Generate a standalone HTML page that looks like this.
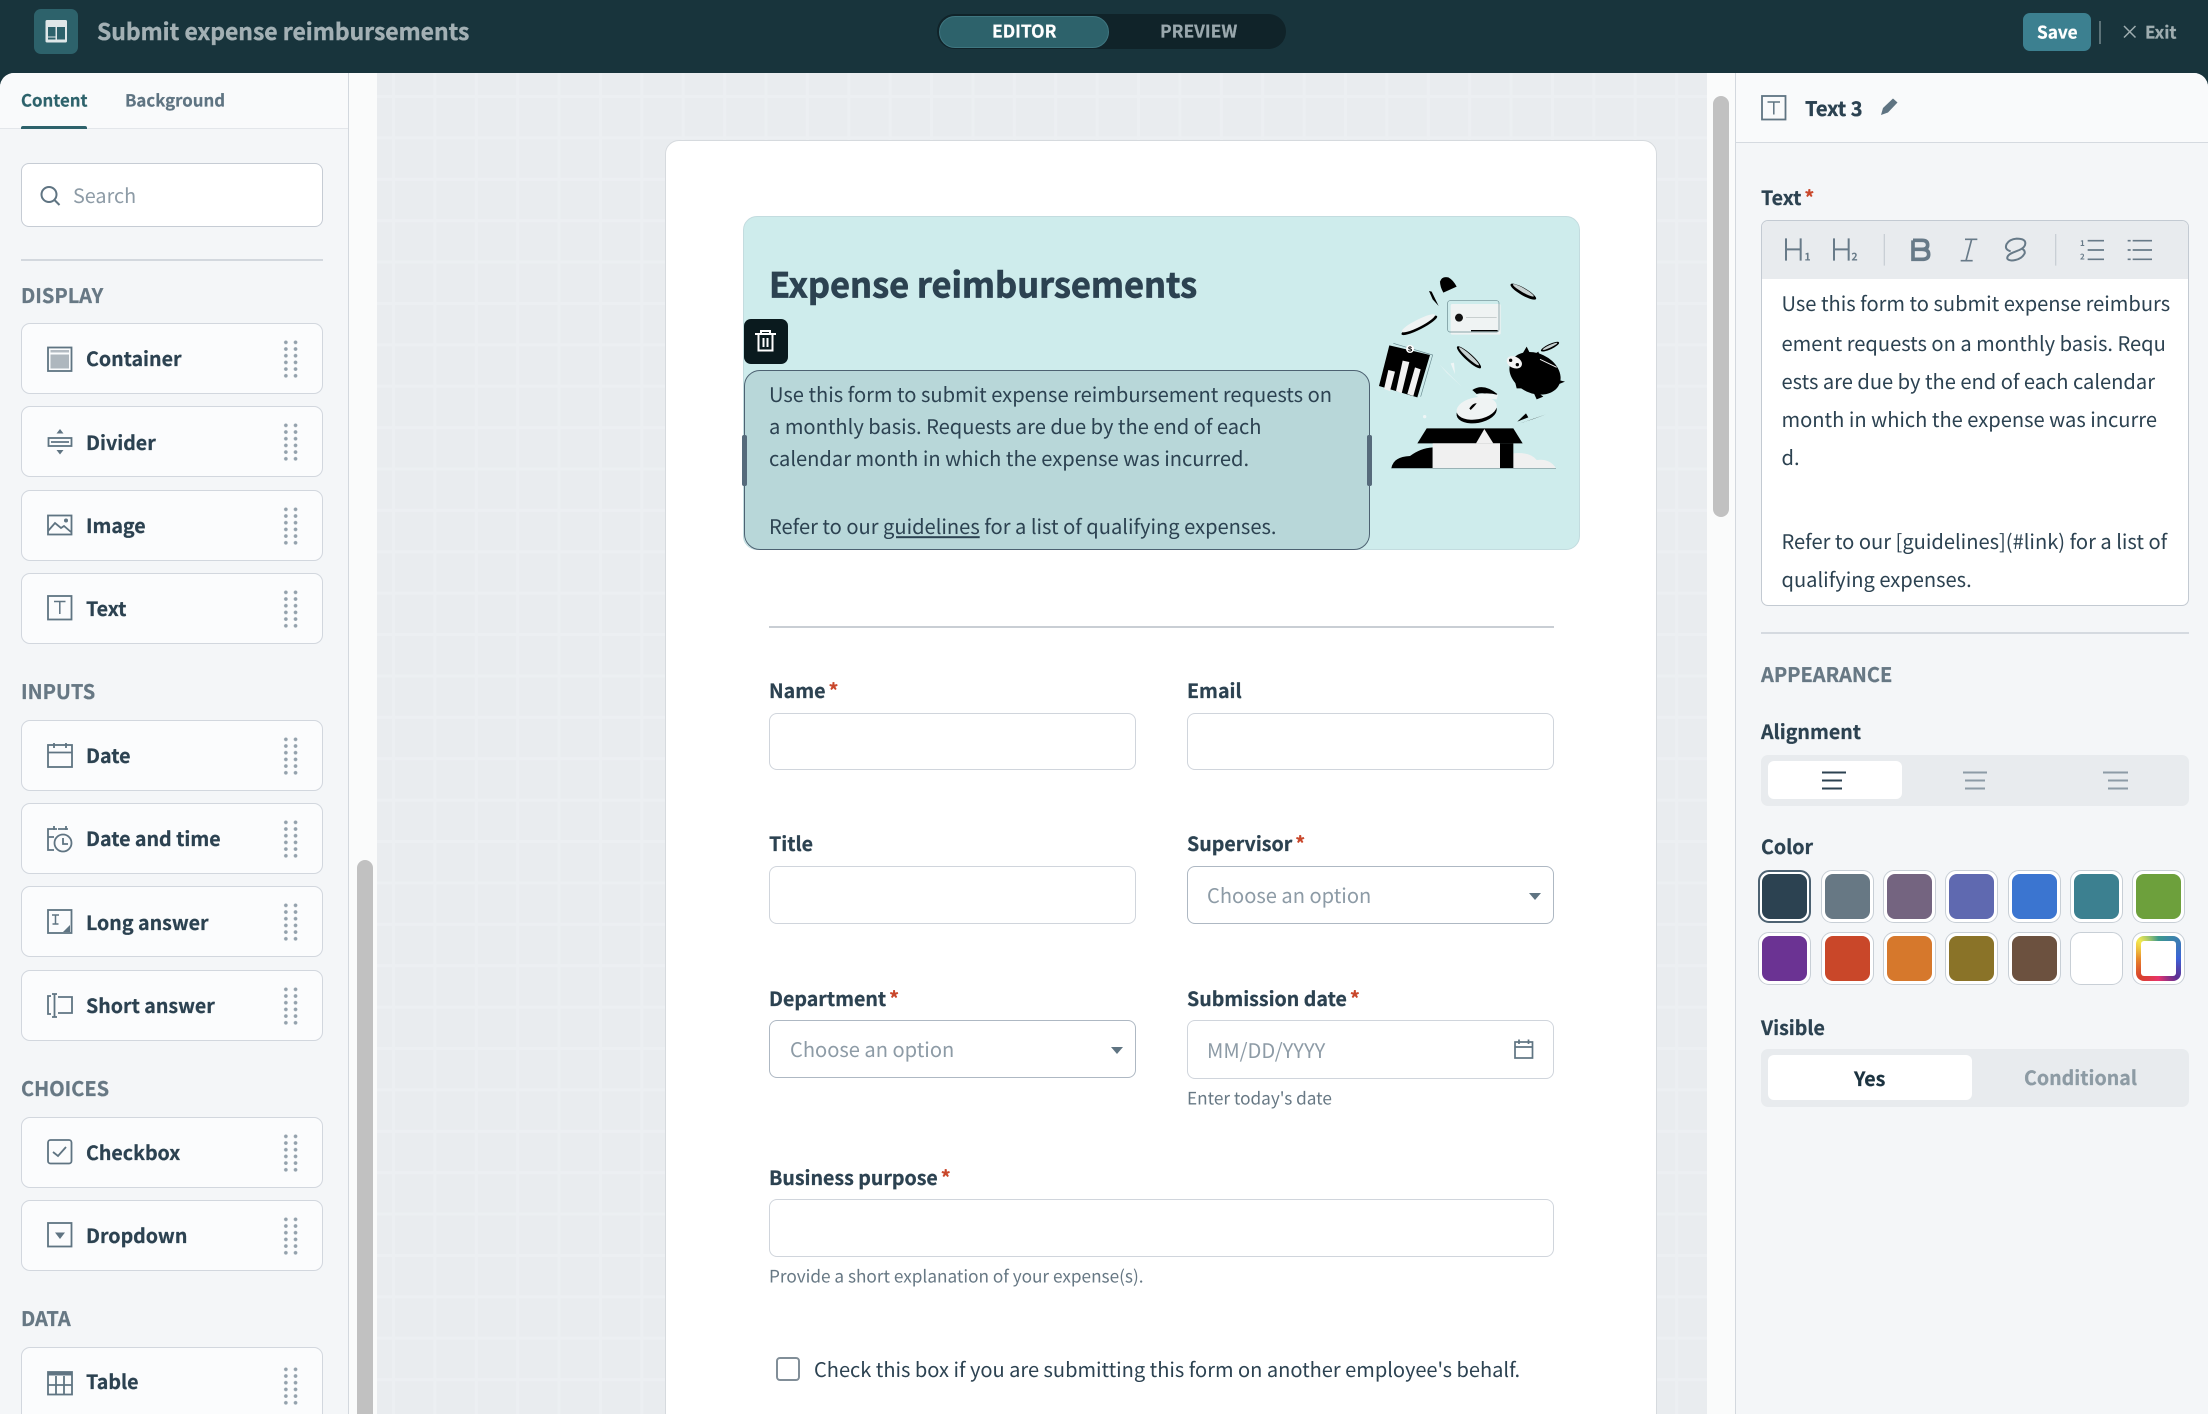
<!DOCTYPE html>
<html><head><meta charset="utf-8"><title>Submit expense reimbursements</title>
<style>
html,body{margin:0;padding:0;width:2208px;height:1414px;overflow:hidden;background:#fafbfb}
*{box-sizing:border-box}
body{position:relative;font-family:"Noto Sans CJK SC","Noto Sans CJK JP","Liberation Sans",sans-serif;color:#2c4251;text-rendering:geometricPrecision;-webkit-font-smoothing:antialiased}
.a{position:absolute}
.t{position:absolute;white-space:nowrap;line-height:40px;height:40px;margin-top:-20px;font-size:20.1px;transform:translateY(-.04em)}
.b{font-weight:600;font-size:19.6px;-webkit-text-stroke:.25px currentColor}
.r{color:#c9472b;margin-left:3px}
.sec{font-size:20px;font-weight:600;color:#677884;left:21px;-webkit-text-stroke:.25px currentColor}
.card{position:absolute;left:21px;width:302px;height:71px;background:#fbfcfd;border:1.5px solid #d2d7de;border-radius:9px}
.drag{position:absolute;left:259px;top:15px;width:20px;height:40px;background-image:radial-gradient(circle at center,#93a1ac 1.6px,transparent 2.1px);background-size:9.7px 6.7px}
.inp{position:absolute;background:#fff;border:1.5px solid #d0d5dc;border-radius:8px}
.sel{border-color:#aeb8c3}
.ph{color:#8d9ba6}
.hlp{font-size:17.2px;color:#677884}
.sw{position:absolute;width:53px;height:53px;background:#fff;border:1.5px solid #c8cfd6;border-radius:11px}
.sw i{position:absolute;left:2.5px;top:2.5px;width:45px;height:45px;border-radius:8px;display:block}
</style></head><body>

<!-- header -->
<div class="a" style="left:0;top:0;width:2208px;height:73px;background:#18343c"></div>
<div class="a" style="left:34px;top:9px;width:44px;height:45px;background:#2d626b;border-radius:7px"></div>
<div class="t" style="left:97px;top:31px;font-size:22.9px;font-weight:700;color:#a3b0b4;-webkit-text-stroke:.4px #a3b0b4">Submit expense reimbursements</div>
<div class="a" style="left:937px;top:14px;width:349px;height:35px;background:#102329;border-radius:18px"></div>
<div class="a" style="left:939px;top:16px;width:170px;height:32px;background:#2d626b;border:1px solid #3f7680;border-radius:16px"></div>
<div class="t" style="left:992px;top:32px;font-size:17.4px;font-weight:700;color:#fff;-webkit-text-stroke:.25px #fff">EDITOR</div>
<div class="t" style="left:1160px;top:32px;font-size:17.4px;font-weight:700;color:#9aa8ad;-webkit-text-stroke:.25px #9aa8ad">PREVIEW</div>
<div class="a" style="left:2023px;top:13px;width:68px;height:38px;background:#3c8090;border-radius:7px"></div>
<div class="t" style="left:2037px;top:31.500px;font-size:17.2px;font-weight:700;color:#fff;-webkit-text-stroke:.25px #fff">Save</div>
<div class="a" style="left:2099px;top:21px;width:2px;height:23px;background:#5c7278"></div>
<div class="t" style="left:2145px;top:31.500px;font-size:17px;font-weight:600;color:#9fadb0;-webkit-text-stroke:.25px #9fadb0">Exit</div>

<!-- canvas -->
<div class="a" style="left:0;top:73px;width:2208px;height:1341px;background:#18343c"></div>
<div class="a" style="left:340px;top:73px;width:1410px;height:1341px;background:#fafbfb"></div>
<div class="a" style="left:377px;top:73px;width:1330px;height:1341px;background-color:#e9ecef;background-image:linear-gradient(90deg,#ecEff2 3px,transparent 3px),linear-gradient(180deg,#ecEff2 3px,transparent 3px);background-size:41.4px 41.4px;background-position:15px 22px"></div>
<div class="a" style="left:357px;top:860px;width:16px;height:554px;background:#c1c1c1;border-radius:8px 8px 0 0"></div>
<div class="a" style="left:1713px;top:96px;width:16px;height:421px;background:#c1c1c1;border-radius:8px"></div>

<!-- left panel -->
<div class="a" style="left:0;top:73px;width:349px;height:1341px;background:#f4f6f8;border-right:1.5px solid #d3d8de;border-radius:14px 0 0 0"></div>
<div class="a" style="left:0;top:73px;width:348px;height:56px;background:#f9fafb;border-bottom:1.5px solid #e3e6ea;border-radius:14px 0 0 0"></div>
<div class="a" style="left:21px;top:126px;width:66px;height:3px;background:#2d626b;border-radius:2px 2px 0 0"></div>
<div class="t" style="left:21px;top:100px;font-size:16.8px;font-weight:600;color:#2d626b;-webkit-text-stroke:.2px #2d626b">Content</div>
<div class="t" style="left:125px;top:100px;font-size:16.8px;font-weight:600;color:#5f7482;-webkit-text-stroke:.2px #5f7482">Background</div>
<div class="inp" style="left:21px;top:163px;width:302px;height:64px;border-color:#c6ccd4"></div>
<div class="t ph" style="left:73px;top:196px;font-size:19.8px">Search</div>
<div class="a" style="left:21px;top:259px;width:302px;height:1.5px;background:#d3d8de"></div>

<div class="t sec" style="top:296px">DISPLAY</div>
<div class="card" style="top:323px"><div class="drag"></div></div>
<div class="t b" style="left:86px;top:358.500px">Container</div>
<div class="card" style="top:406px"><div class="drag"></div></div>
<div class="t b" style="left:86px;top:443px">Divider</div>
<div class="card" style="top:490px"><div class="drag"></div></div>
<div class="t b" style="left:86px;top:526px">Image</div>
<div class="card" style="top:573px"><div class="drag"></div></div>
<div class="t b" style="left:86px;top:609px">Text</div>

<div class="t sec" style="top:692px">INPUTS</div>
<div class="card" style="top:720px"><div class="drag"></div></div>
<div class="t b" style="left:86px;top:756px">Date</div>
<div class="card" style="top:803px"><div class="drag"></div></div>
<div class="t b" style="left:86px;top:838.500px">Date and time</div>
<div class="card" style="top:886px"><div class="drag"></div></div>
<div class="t b" style="left:86px;top:923px">Long answer</div>
<div class="card" style="top:970px"><div class="drag"></div></div>
<div class="t b" style="left:86px;top:1006px">Short answer</div>

<div class="t sec" style="top:1089px">CHOICES</div>
<div class="card" style="top:1117px"><div class="drag"></div></div>
<div class="t b" style="left:86px;top:1153px">Checkbox</div>
<div class="card" style="top:1200px"><div class="drag"></div></div>
<div class="t b" style="left:86px;top:1236px">Dropdown</div>

<div class="t sec" style="top:1319px">DATA</div>
<div class="card" style="top:1347px;height:80px"><div class="drag" style="top:18px"></div></div>
<div class="t b" style="left:86px;top:1382px">Table</div>

<!-- form card -->
<div class="a" style="left:665px;top:140px;width:992px;height:1300px;background:#fff;border:1.5px solid #d6dade;border-radius:14px"></div>
<div class="a" style="left:743px;top:216px;width:837px;height:334px;background:#ceecec;border:1.5px solid #c3dcdf;border-radius:14px"></div>
<div class="t" style="left:769px;top:284px;font-size:34.4px;font-weight:700;-webkit-text-stroke:.7px #2c4251">Expense reimbursements</div>
<div class="a" style="left:744px;top:319px;width:44px;height:45px;background:#0a1a1e;border-radius:7px"></div>
<div class="a" style="left:744px;top:370px;width:626px;height:180px;background:#b8d7d9;border:1.5px solid #4d6272;border-radius:16px"></div>
<div class="a" style="left:742px;top:435px;width:5px;height:51px;background:#566a7b;border-radius:2px"></div>
<div class="a" style="left:1367px;top:435px;width:5px;height:51px;background:#566a7b;border-radius:2px"></div>
<div class="t" style="left:769px;top:394.500px">Use this form to submit expense reimbursement requests on</div>
<div class="t" style="left:769px;top:426.500px">a monthly basis. Requests are due by the end of each</div>
<div class="t" style="left:769px;top:458.500px">calendar month in which the expense was incurred.</div>
<div class="t" style="left:769px;top:527px">Refer to our <span style="text-decoration:underline">guidelines</span> for a list of qualifying expenses.</div>

<div class="a" style="left:769px;top:626px;width:785px;height:1.5px;background:#c9ced4"></div>

<div class="t b" style="left:769px;top:691px">Name<span class="r">*</span></div>
<div class="inp" style="left:769px;top:713px;width:367px;height:57px"></div>
<div class="t b" style="left:1187px;top:691px">Email</div>
<div class="inp" style="left:1187px;top:713px;width:367px;height:57px"></div>

<div class="t b" style="left:769px;top:844px">Title</div>
<div class="inp" style="left:769px;top:866px;width:367px;height:58px"></div>
<div class="t b" style="left:1187px;top:844px">Supervisor<span class="r">*</span></div>
<div class="inp sel" style="left:1187px;top:866px;width:367px;height:58px"></div>
<div class="t ph" style="left:1207px;top:896px">Choose an option</div>

<div class="t b" style="left:769px;top:999px">Department<span class="r">*</span></div>
<div class="inp sel" style="left:769px;top:1020px;width:367px;height:58px"></div>
<div class="t ph" style="left:790px;top:1050px">Choose an option</div>
<div class="t b" style="left:1187px;top:999px">Submission date<span class="r">*</span></div>
<div class="inp" style="left:1187px;top:1020px;width:367px;height:59px"></div>
<div class="t ph" style="left:1207px;top:1051px">MM/DD/YYYY</div>
<div class="t hlp" style="left:1187px;top:1098px">Enter today's date</div>

<div class="t b" style="left:769px;top:1178px">Business purpose<span class="r">*</span></div>
<div class="inp" style="left:769px;top:1199px;width:785px;height:58px"></div>
<div class="t hlp" style="left:769px;top:1276px">Provide a short explanation of your expense(s).</div>
<div class="a" style="left:776px;top:1357px;width:24px;height:24px;background:#fff;border:2px solid #818e98;border-radius:4px"></div>
<div class="t" style="left:814px;top:1370px;font-size:20.05px">Check this box if you are submitting this form on another employee's behalf.</div>

<!-- right panel -->
<div class="a" style="left:1735px;top:73px;width:473px;height:1341px;background:#f4f6f8;border-left:1.5px solid #d3d8de;border-radius:0 14px 0 0"></div>
<div class="a" style="left:1736px;top:73px;width:472px;height:70px;background:#f9fafb;border-bottom:1.5px solid #d5dae0;border-radius:0 14px 0 0"></div>
<div class="t" style="left:1805px;top:108.500px;font-size:20px;font-weight:700;-webkit-text-stroke:.35px #2c4251">Text 3</div>
<div class="t b" style="left:1761px;top:198px">Text<span class="r">*</span></div>
<div class="a" style="left:1761px;top:220px;width:428px;height:386px;background:#fff;border:1.5px solid #c3cad2;border-radius:7px;overflow:hidden"><div style="height:58px;background:#e8ebee"></div></div>
<div class="t" style="left:1781.500px;top:304px">Use this form to submit expense reimburs</div>
<div class="t" style="left:1781.500px;top:344px">ement requests on a monthly basis. Requ</div>
<div class="t" style="left:1781.500px;top:382px">ests are due by the end of each calendar</div>
<div class="t" style="left:1781.500px;top:420px">month in which the expense was incurre</div>
<div class="t" style="left:1781.500px;top:458px">d.</div>
<div class="t" style="left:1781.500px;top:542px">Refer to our [guidelines](#link) for a list of</div>
<div class="t" style="left:1781.500px;top:580px">qualifying expenses.</div>
<div class="a" style="left:1761px;top:632px;width:428px;height:1.5px;background:#d5dae0"></div>

<div class="t" style="left:1761px;top:675px;font-size:20px;font-weight:600;color:#677884;-webkit-text-stroke:.25px #677884">APPEARANCE</div>
<div class="t b" style="left:1761px;top:732px">Alignment</div>
<div class="a" style="left:1761px;top:755px;width:428px;height:51px;background:#e8ebee;border-radius:7px"></div>
<div class="a" style="left:1768px;top:761px;width:134px;height:38px;background:#fff;border-radius:6px"></div>

<div class="t b" style="left:1761px;top:847px">Color</div>
<div class="sw" style="left:1758px;top:870px;border:2.5px solid #4d6272"><i style="background:#2c4251;left:2px;top:2px"></i></div>
<div class="sw" style="left:1821px;top:870px"><i style="background:#677884"></i></div>
<div class="sw" style="left:1883px;top:870px"><i style="background:#746480"></i></div>
<div class="sw" style="left:1945px;top:870px"><i style="background:#5f69b0"></i></div>
<div class="sw" style="left:2008px;top:870px"><i style="background:#3b75d0"></i></div>
<div class="sw" style="left:2070px;top:870px"><i style="background:#3c8090"></i></div>
<div class="sw" style="left:2132px;top:870px"><i style="background:#6da03c"></i></div>
<div class="sw" style="left:1758px;top:932px"><i style="background:#6b3393"></i></div>
<div class="sw" style="left:1821px;top:932px"><i style="background:#c94729"></i></div>
<div class="sw" style="left:1883px;top:932px"><i style="background:#d6782c"></i></div>
<div class="sw" style="left:1945px;top:932px"><i style="background:#8a7328"></i></div>
<div class="sw" style="left:2008px;top:932px"><i style="background:#6c513f"></i></div>
<div class="sw" style="left:2070px;top:932px"></div>
<div class="sw" style="left:2132px;top:932px"><i style="background:conic-gradient(from 0deg,#3c9a8c,#3b62d8 25%,#5f2f93 38%,#e8336c 50%,#d8402c 62%,#e88a2c 75%,#f3ea4f 87%,#3c9a8c)"></i></div>
<div class="a" style="left:2141px;top:941px;width:35px;height:35px;background:#fff;border-radius:3px"></div>

<div class="t b" style="left:1761px;top:1028px">Visible</div>
<div class="a" style="left:1761px;top:1049px;width:428px;height:58px;background:#e8ebee;border-radius:7px"></div>
<div class="a" style="left:1768px;top:1055px;width:204px;height:45px;background:#fff;border-radius:6px"></div>
<div class="t b" style="left:1854px;top:1078.500px;color:#1c3340">Yes</div>
<div class="t b" style="left:2024px;top:1078px;color:#8d9ba4">Conditional</div>

<!-- icons overlay -->
<svg class="a" style="left:0;top:0" width="2208" height="1414" viewBox="0 0 2208 1414" xmlns="http://www.w3.org/2000/svg">
<!-- app icon -->
<rect x="45.500" y="20" width="21.500" height="22.500" rx="1.500" fill="#dfe7e8"/>
<rect x="48" y="27" width="7.500" height="9.500" fill="#2d626b"/><rect x="57" y="27" width="8" height="12.500" fill="#2d626b"/><rect x="48" y="37.500" width="7.500" height="2" fill="#2d626b"/>
<path d="M2124 26L2135.500 37.500M2135.500 26L2124 37.500" stroke="#9fadb0" stroke-width="1.500" fill="none"/>
<!-- search -->
<g fill="none" stroke="#5f7482" stroke-width="2"><circle cx="49" cy="194.500" r="7.500"/><path d="M54.500 200L59.500 205"/></g>
<!-- left icons -->
<g fill="none" stroke="#5f7482" stroke-width="1.800">
<rect x="48" y="347.500" width="23.500" height="23.500"/>
<rect x="48.500" y="438" width="23" height="8"/><path d="M51 442H69"/>
<rect x="48" y="515.500" width="23.500" height="19"/><path d="M48 531L55 523L61 528L64 526L71 532"/>
<rect x="48" y="596" width="23.500" height="23.500"/><path d="M54 601.500H65.500M59.800 601.500V614" stroke-width="1.500"/>
<rect x="48" y="745" width="24" height="22"/><path d="M48 752.500H72M54 743V748M66 743V748"/>
<path d="M57 829H48V850H54M48 837H54M54 826V830M66 826V830M58 829H68"/><circle cx="63" cy="843" r="8.500"/><path d="M63 838V844H68"/>
<rect x="48" y="910" width="23.500" height="23"/><path d="M52 915H59M55.500 915V924M52.500 924H58.500" stroke-width="1.500"/>
<path d="M51 996H48V1014H51M54.500 994V1017M52 994H57M52 1017H57M58 997H72V1013H58"/>
<rect x="48" y="1140" width="23.500" height="23.500" rx="2.500"/><path d="M53 1152L58 1156L66 1147"/>
<rect x="48" y="1223" width="23.500" height="23.500"/>
<rect x="48" y="1372" width="24" height="22.500"/><path d="M56 1376V1394M64 1376V1394M48 1385H72"/>
</g>
<path d="M55 1232.500H65L60 1239Z" fill="#5f7482"/>
<rect x="50.500" y="350" width="18.500" height="2.500" fill="#b3bbc2"/><rect x="50.500" y="354.500" width="18.500" height="14" fill="#aeb7be"/>
<path d="M60 429L63.500 433.500H56.500ZM60 454.500L63.500 450H56.500Z" fill="#5f7482"/>
<circle cx="66" cy="520.500" r="2" fill="#5f7482"/>
<path d="M70 925V932H63Z" fill="#5f7482"/><rect x="48" y="1372" width="24" height="3.500" fill="#5f7482"/>
<!-- trash -->
<g fill="none" stroke="#fff" stroke-width="2"><path d="M755 334H776M761 334V331H770V334M758.500 334V350.500H772.500V334M763.500 338V347M767.500 338V347"/></g>
<!-- selects -->
<path d="M1529 893H1541L1535 900ZM1111 1047H1123L1117 1054Z" fill="#5f7482"/>
<g fill="none" stroke="#5f7482" stroke-width="1.700"><rect x="1515" y="1042" width="17.500" height="16"/><path d="M1515 1047H1532.500M1519 1039.500V1044M1528.500 1039.500V1044"/></g>
<!-- right header -->
<g fill="none" stroke="#5f7482" stroke-width="1.800"><rect x="1762" y="96" width="23.500" height="23.500"/><path d="M1767.500 102H1780M1773.800 102V114.500" stroke-width="1.500"/></g>
<path d="M1881 115L1883 108L1893 98.500L1897.500 102.500L1888 112.500Z" fill="#5f7482"/>
<!-- toolbar -->
<g transform="translate(1750 220) scale(.33333)" fill="none" stroke="#677a88" stroke-width="5">
<path d="M108 55V122M152 55V122M108 88H152M252 55V122M296 55V122M252 88H296" stroke-width="6"/>
<path d="M403 42V137M917 42V137" stroke="#c9cfd5" stroke-width="4"/>
<path d="M489 61H516Q533 61 533 75Q533 88 516 88H489M516 88Q536 88 536 103Q536 118 516 118H489V61" stroke-width="11"/>
<path d="M645 58H682M632 122H668M665 58L648 122"/>
<path d="M782 94Q762 88 770 72Q778 58 800 56Q826 56 826 70Q826 82 808 90L788 98Q770 106 772 116Q778 124 796 120Q816 116 824 100Q826 92 816 86" stroke-width="6"/>
<path d="M1013 62H1062M1013 90H1062M1013 118H1062M1148 62H1206M1148 90H1206M1148 118H1206"/>
<path d="M1133 62H1142M1133 90H1142M1133 118H1142"/>
<g fill="#677a88" stroke="none" font-family="Noto Sans CJK SC,sans-serif" font-weight="700" font-size="32"><text x="163" y="122">1</text><text x="304" y="122">2</text><text x="990" y="78" font-size="24">1</text><text x="990" y="119" font-size="24">2</text></g>
</g>
<!-- align -->
<path d="M1822 772.500H1846M1822 780.500H1842M1822 788.500H1842" stroke="#2c4251" stroke-width="2" fill="none"/>
<path d="M1963 772.500H1987M1965 780.500H1985M1965 788.500H1985M2103 772.500H2128M2108 780.500H2128M2108 788.500H2128" stroke="#8d9ba6" stroke-width="2" fill="none"/>

<!-- illustration -->
<g transform="translate(1300 240) scale(.33333)">
<path d="M420 125Q425 108 445 112Q460 120 470 140L430 158Q420 140 420 125Z" fill="#000"/>
<path d="M387 153L395 155L416 198L398 178Z" fill="#000"/>
<ellipse cx="670" cy="155" rx="44" ry="11" transform="rotate(30 670 155)" fill="#000"/><ellipse cx="670" cy="151" rx="36" ry="6" transform="rotate(30 670 151)" fill="#c8d2d2"/>
<rect x="452" y="192" width="150" height="92" rx="5" fill="#eff3f3"/>
<rect x="443" y="182" width="154" height="94" rx="7" fill="none" stroke="#6a8a90" stroke-width="2"/>
<circle cx="477" cy="233" r="12" fill="#111"/><rect x="498" y="231" width="92" height="3" fill="#c8cfcf"/><rect x="513" y="270" width="80" height="4" fill="#000"/>
<ellipse cx="358" cy="256" rx="60" ry="12" transform="rotate(-27 358 256)" fill="#000"/><ellipse cx="355" cy="250" rx="56" ry="11" transform="rotate(-27 355 250)" fill="#eff3f3"/>
<path d="M268 316L390 345L352 472L237 438Z" fill="#000"/>
<path d="M280 310L398 345L362 470" fill="none" stroke="#6a8a90" stroke-width="2"/>
<path d="M265 390L285 395L270 453L252 447ZM308 362L328 366L305 460L288 453ZM345 382L362 388L340 468L322 462Z" fill="#f2f2f2"/>
<circle cx="330" cy="327" r="12" fill="#fff"/>
<text x="330" y="335" text-anchor="middle" font-family="Liberation Sans,sans-serif" font-size="22" font-weight="700" fill="#000">$</text>
<ellipse cx="507" cy="352" rx="48" ry="11" transform="rotate(42 507 352)" fill="#000"/><ellipse cx="507" cy="349" rx="40" ry="6" transform="rotate(42 507 349)" fill="#c8d2d2"/>
<path d="M418 373L485 440L440 398ZM452 370L462 368L465 402Z" fill="#eff6f6"/>
<ellipse cx="705" cy="400" rx="80" ry="60" transform="rotate(25 705 400)" fill="#000"/>
<path d="M665 345L680 320L690 340ZM700 345L715 335L722 355ZM645 425L665 445L650 445ZM695 445L730 470L710 478ZM775 420L795 425L770 435Z" fill="#000"/>
<ellipse cx="643" cy="367" rx="24" ry="17" transform="rotate(25 643 367)" fill="#f2f2f2"/><circle cx="632" cy="361" r="5" fill="#000"/><circle cx="652" cy="374" r="5" fill="#000"/>
<ellipse cx="750" cy="320" rx="30" ry="8" transform="rotate(-25 750 320)" fill="#000"/><ellipse cx="750" cy="319" rx="24" ry="4" transform="rotate(-25 750 319)" fill="#c8d2d2"/>
<path d="M720 358L770 382" stroke="#f2f2f2" stroke-width="3"/>
<path d="M517 450Q550 428 592 462L585 470Q555 455 530 462Z" fill="#000"/>
<ellipse cx="530" cy="516" rx="61" ry="33" transform="rotate(-10 530 516)" fill="#000"/>
<ellipse cx="530" cy="505" rx="61" ry="33" transform="rotate(-10 530 505)" fill="#eff3f3"/>
<path d="M508 505Q520 488 530 490L522 500L512 510Z" fill="#000"/>
<path d="M525 465Q560 455 594 465L590 478L540 474Z" fill="#eff6f6"/>
<path d="M652 545L678 520L685 532ZM660 550L738 523L700 537Z" fill="#000"/>
<path d="M380 565H640L668 610H352Z" fill="#000"/>
<path d="M274 685Q280 650 330 648Q360 625 398 622V685Z" fill="#000"/>
<path d="M640 640Q690 635 710 660Q750 655 768 685H640Z" fill="#f0f0f0"/>
<rect x="398" y="610" width="202" height="75" fill="#f0f0f0"/><rect x="600" y="610" width="40" height="75" fill="#000"/>
<path d="M528 610L553 567L580 610Z" fill="#f0f0f0"/>
<path d="M274 685H768" stroke="#7a8f94" stroke-width="2"/>
<circle cx="374" cy="530" r="5" fill="#eff6f6"/>
</g>
</svg>
</body></html>
